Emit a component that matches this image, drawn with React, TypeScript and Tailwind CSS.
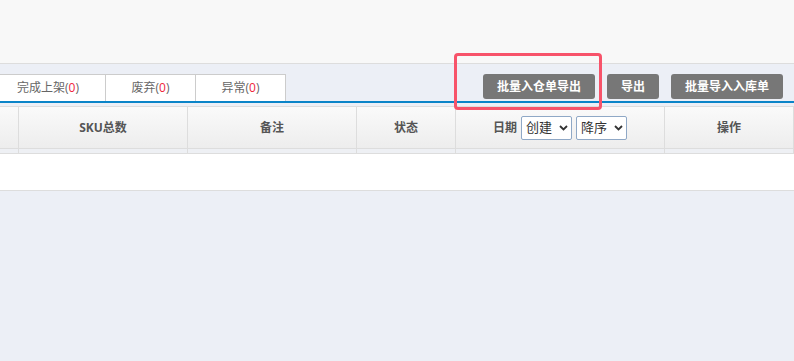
const font = { fontFamily: '"Open Sans", "Noto Sans CJK SC", sans-serif' };

function Tab({ label, w }: { label: string; w: string }) {
    return (
        <div className={`${w} h-[27px] bg-white border-t border-r border-[#ccc] flex items-center justify-center text-[12px] text-[#666] whitespace-nowrap`}>
            {label}
            <span>(</span>
            <span className="text-[#f0243c]">0</span>
            <span>)</span>
        </div>
    );
}

function Btn({ children, w }: { children: string; w: string }) {
    return (
        <div className={`${w} h-[25px] rounded-[3px] bg-[#777] text-white text-[12px] font-bold flex items-center justify-center whitespace-nowrap`}>
            {children}
        </div>
    );
}

function Select({ label }: { label: string }) {
    return (
        <div className="w-[51px] h-[24px] shrink-0 border border-[#8fa8c6] rounded-[2px] bg-white flex items-center justify-between pl-[4px] pr-[3px] whitespace-nowrap">
            <span className="text-[13px] text-[#333] font-normal">{label}</span>
            <svg width="9" height="6" viewBox="0 0 9 6" className="shrink-0">
                <path d="M1 1 L4.5 4.5 L8 1" fill="none" stroke="#333" strokeWidth="1.8" />
            </svg>
        </div>
    );
}

export default function App() {
    const cols = [
        { w: 'w-[19px]', label: '' },
        { w: 'w-[169px]', label: 'SKU总数' },
        { w: 'w-[169px]', label: '备注' },
        { w: 'w-[99px]', label: '状态' },
        { w: 'w-[209px]', label: 'date' },
        { w: 'flex-1', label: '操作' },
    ];
    return (
        <div className="w-[794px] h-[361px] bg-[#eceff6] relative overflow-hidden" style={font}>
            {/* Top bar */}
            <div className="h-[64px] bg-[#f8f8f8] border-b border-[#ddd]" />

            {/* Tabs + actions */}
            <div className="mt-[10px] flex items-start justify-between border-b-2 border-[#0a84c8]">
                <div className="flex -ml-[9px]">
                    <Tab label="完成上架" w="w-[115px]" />
                    <Tab label="废弃" w="w-[90px]" />
                    <Tab label="异常" w="w-[90px]" />
                </div>
                <div className="flex gap-[12px] pr-[11px]">
                    <Btn w="w-[112px]">批量入仓单导出</Btn>
                    <Btn w="w-[52px]">导出</Btn>
                    <Btn w="w-[112px]">批量导入入库单</Btn>
                </div>
            </div>

            {/* Table */}
            <div className="mt-[3px]">
                <div className="flex h-[43px] border-y border-[#ddd] bg-gradient-to-b from-[#fafafa] to-[#ededed]">
                    {cols.map((c, i) => (
                        <div
                            key={i}
                            className={`${c.w} shrink-0 border-r border-[#ddd] flex items-center justify-center text-[12px] font-bold text-[#555]`}
                        >
                            {c.label === 'date' ? (
                                <div className="flex items-center gap-[4px] whitespace-nowrap">
                                    <span>日期</span>
                                    <Select label="创建" />
                                    <Select label="降序" />
                                </div>
                            ) : (
                                c.label
                            )}
                        </div>
                    ))}
                </div>
                <div className="flex h-[5px] bg-[#eef0f4] border-b border-[#ddd]">
                    {cols.map((c, i) => (
                        <div key={i} className={`${c.w} shrink-0 border-r border-[#ddd]`} />
                    ))}
                </div>
                <div className="h-[37px] bg-white border-b border-[#ddd]" />
            </div>

            {/* Highlight box */}
            <div className="absolute left-[454px] top-[53px] w-[148px] h-[57px] border-[3px] border-[#f7536a] rounded-[4px]" />
        </div>
    );
}
